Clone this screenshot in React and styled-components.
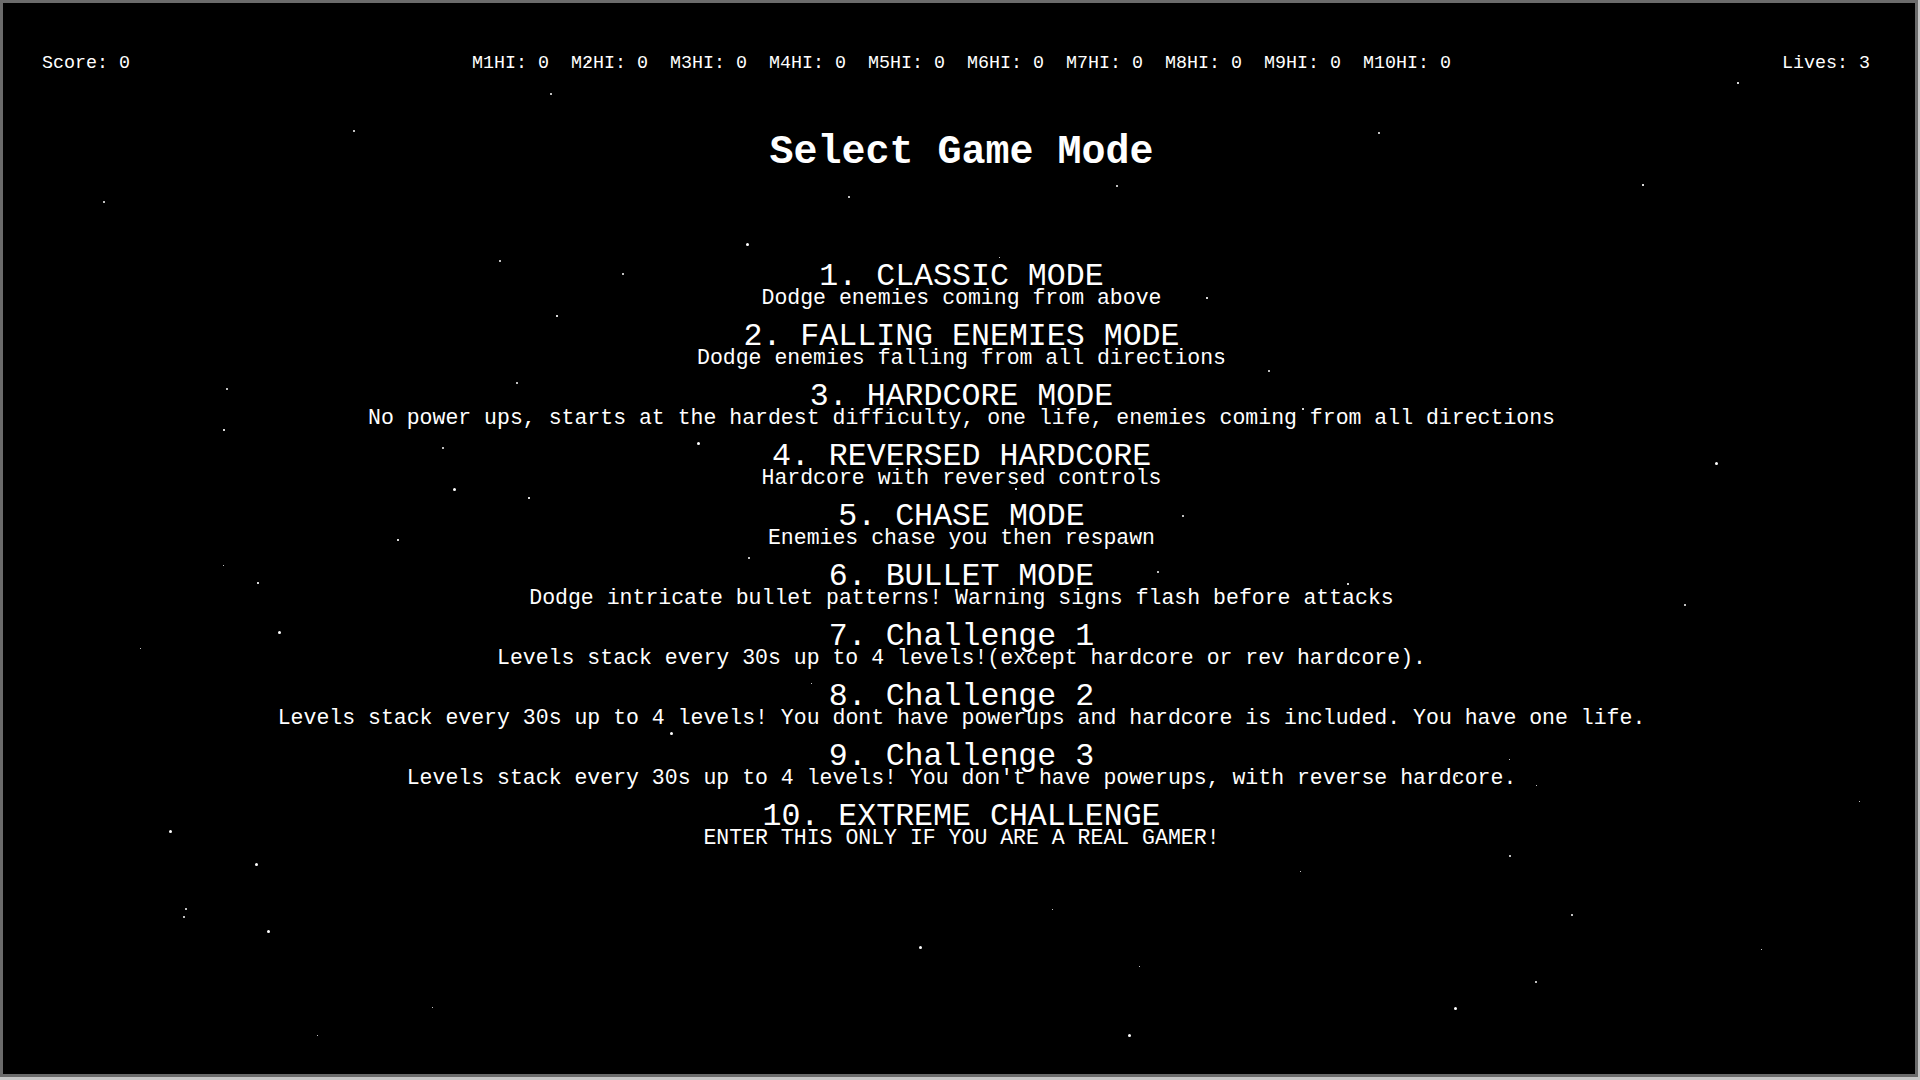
import React from "react";
import styled, { createGlobalStyle } from "styled-components";

const Global = createGlobalStyle`
  html, body {
    margin: 0;
    padding: 0;
    background: #c6c6c6;
  }
  body {
    width: 1920px;
    height: 1080px;
    overflow: hidden;
    font-family: "Liberation Mono", "Courier New", monospace;
  }
`;

const Frame = styled.div`
  position: relative;
  box-sizing: border-box;
  width: 1918px;
  height: 1077px;
  border: 3px solid #6b6b6b;
  background: #000;
  color: #fff;
  overflow: hidden;
  display: flex;
  flex-direction: column;
  padding: 50.2px 0 0 5px;
`;

const Hud = styled.div`
  position: relative;
  z-index: 1;
  display: grid;
  grid-template-columns: 1fr auto 1fr;
  align-items: center;
  font-size: 18.33px;
  line-height: 22px;
  white-space: pre;
`;

const HudLeft = styled.span`
  justify-self: start;
  margin-left: 34px;
`;

const HudCenter = styled.span`
  justify-self: center;
`;

const HudRight = styled.span`
  justify-self: end;
  margin-right: 45px;
`;

const Title = styled.h1`
  position: relative;
  z-index: 1;
  margin: 53.8px 0 0;
  font-size: 40px;
  line-height: 48px;
  font-weight: bold;
  text-align: center;
`;

const ModeList = styled.div`
  position: relative;
  z-index: 1;
  margin-top: 87.7px;
  display: flex;
  flex-direction: column;
  align-items: center;
  gap: 17.4px;
`;

const Mode = styled.div`
  display: flex;
  flex-direction: column;
  align-items: center;
  white-space: pre;
`;

const ModeName = styled.div`
  font-size: 31.6px;
  line-height: 24px;
`;

const ModeDesc = styled.div`
  margin-top: 1.2px;
  font-size: 21.5px;
  line-height: 17.4px;
`;

const Star = styled.span.attrs((p) => ({
  style: {
    left: `${p.$x - p.$s / 2}px`,
    top: `${p.$y - p.$s / 2}px`,
    width: `${p.$s}px`,
    height: `${p.$s}px`,
  },
}))`
  position: absolute;
  border-radius: 50%;
  background: #fff;
  z-index: 2;
  pointer-events: none;
`;

const stars = [
  [551, 94, 2], [354, 131, 2], [1379, 133, 2], [104, 202, 2], [849, 197, 2],
  [1117, 186, 2], [1643, 185, 1.5], [1738, 83, 1.5], [747, 244, 3], [500, 261, 2],
  [623, 274, 2], [1207, 298, 1.5], [557, 316, 1.5], [227, 389, 2], [517, 383, 2],
  [1269, 371, 2], [224, 430, 1.5], [443, 422, 1.5], [443, 448, 2], [698, 443, 3],
  [1303, 409, 1.5], [1716, 463, 3], [454, 489, 3], [529, 498, 1.5], [398, 540, 1.5],
  [1016, 489, 1.5], [1183, 516, 2], [749, 558, 2], [223, 565, 1], [258, 583, 1.5],
  [1158, 572, 2], [1348, 584, 1.5], [1685, 605, 2.5], [279, 632, 3], [140, 648, 1],
  [671, 733, 3], [811, 683, 1], [1509, 759, 1], [1536, 785, 1], [1859, 801, 1],
  [170, 831, 3], [256, 864, 3], [1510, 856, 2], [1300, 871, 1], [186, 909, 2],
  [184, 917, 2], [268, 931, 3], [1052, 909, 1], [1572, 915, 2], [920, 947, 3],
  [1761, 949, 1], [1139, 966, 1], [1536, 982, 2], [1455, 1008, 3], [432, 1007, 1],
  [317, 1035, 1], [1129, 1035, 3], [1013, 331, 3], [1223, 359, 2], [588, 61, 3],
  [1457, 776, 2], [899, 747, 2], [999, 257, 1], [966, 516, 1.5],
];

const modes = [
  ["1. CLASSIC MODE", "Dodge enemies coming from above"],
  ["2. FALLING ENEMIES MODE", "Dodge enemies falling from all directions"],
  ["3. HARDCORE MODE", "No power ups, starts at the hardest difficulty, one life, enemies coming from all directions"],
  ["4. REVERSED HARDCORE", "Hardcore with reversed controls"],
  ["5. CHASE MODE", "Enemies chase you then respawn"],
  ["6. BULLET MODE", "Dodge intricate bullet patterns! Warning signs flash before attacks"],
  ["7. Challenge 1", "Levels stack every 30s up to 4 levels!(except hardcore or rev hardcore)."],
  ["8. Challenge 2", "Levels stack every 30s up to 4 levels! You dont have powerups and hardcore is included. You have one life."],
  ["9. Challenge 3", "Levels stack every 30s up to 4 levels! You don't have powerups, with reverse hardcore."],
  ["10. EXTREME CHALLENGE", "ENTER THIS ONLY IF YOU ARE A REAL GAMER!"],
];

const hiText = Array.from({ length: 10 }, (_, i) => `M${i + 1}HI: 0`).join("  ");

export default function App() {
  return (
    <>
      <Global />
      <Frame>
        {stars.map(([x, y, s], i) => (
          <Star key={i} $x={x - 3} $y={y - 3} $s={s} />
        ))}
        <Hud>
          <HudLeft>Score: 0</HudLeft>
          <HudCenter>{hiText}</HudCenter>
          <HudRight>Lives: 3</HudRight>
        </Hud>
        <Title>Select Game Mode</Title>
        <ModeList>
          {modes.map(([name, desc]) => (
            <Mode key={name}>
              <ModeName>{name}</ModeName>
              <ModeDesc>{desc}</ModeDesc>
            </Mode>
          ))}
        </ModeList>
      </Frame>
    </>
  );
}
